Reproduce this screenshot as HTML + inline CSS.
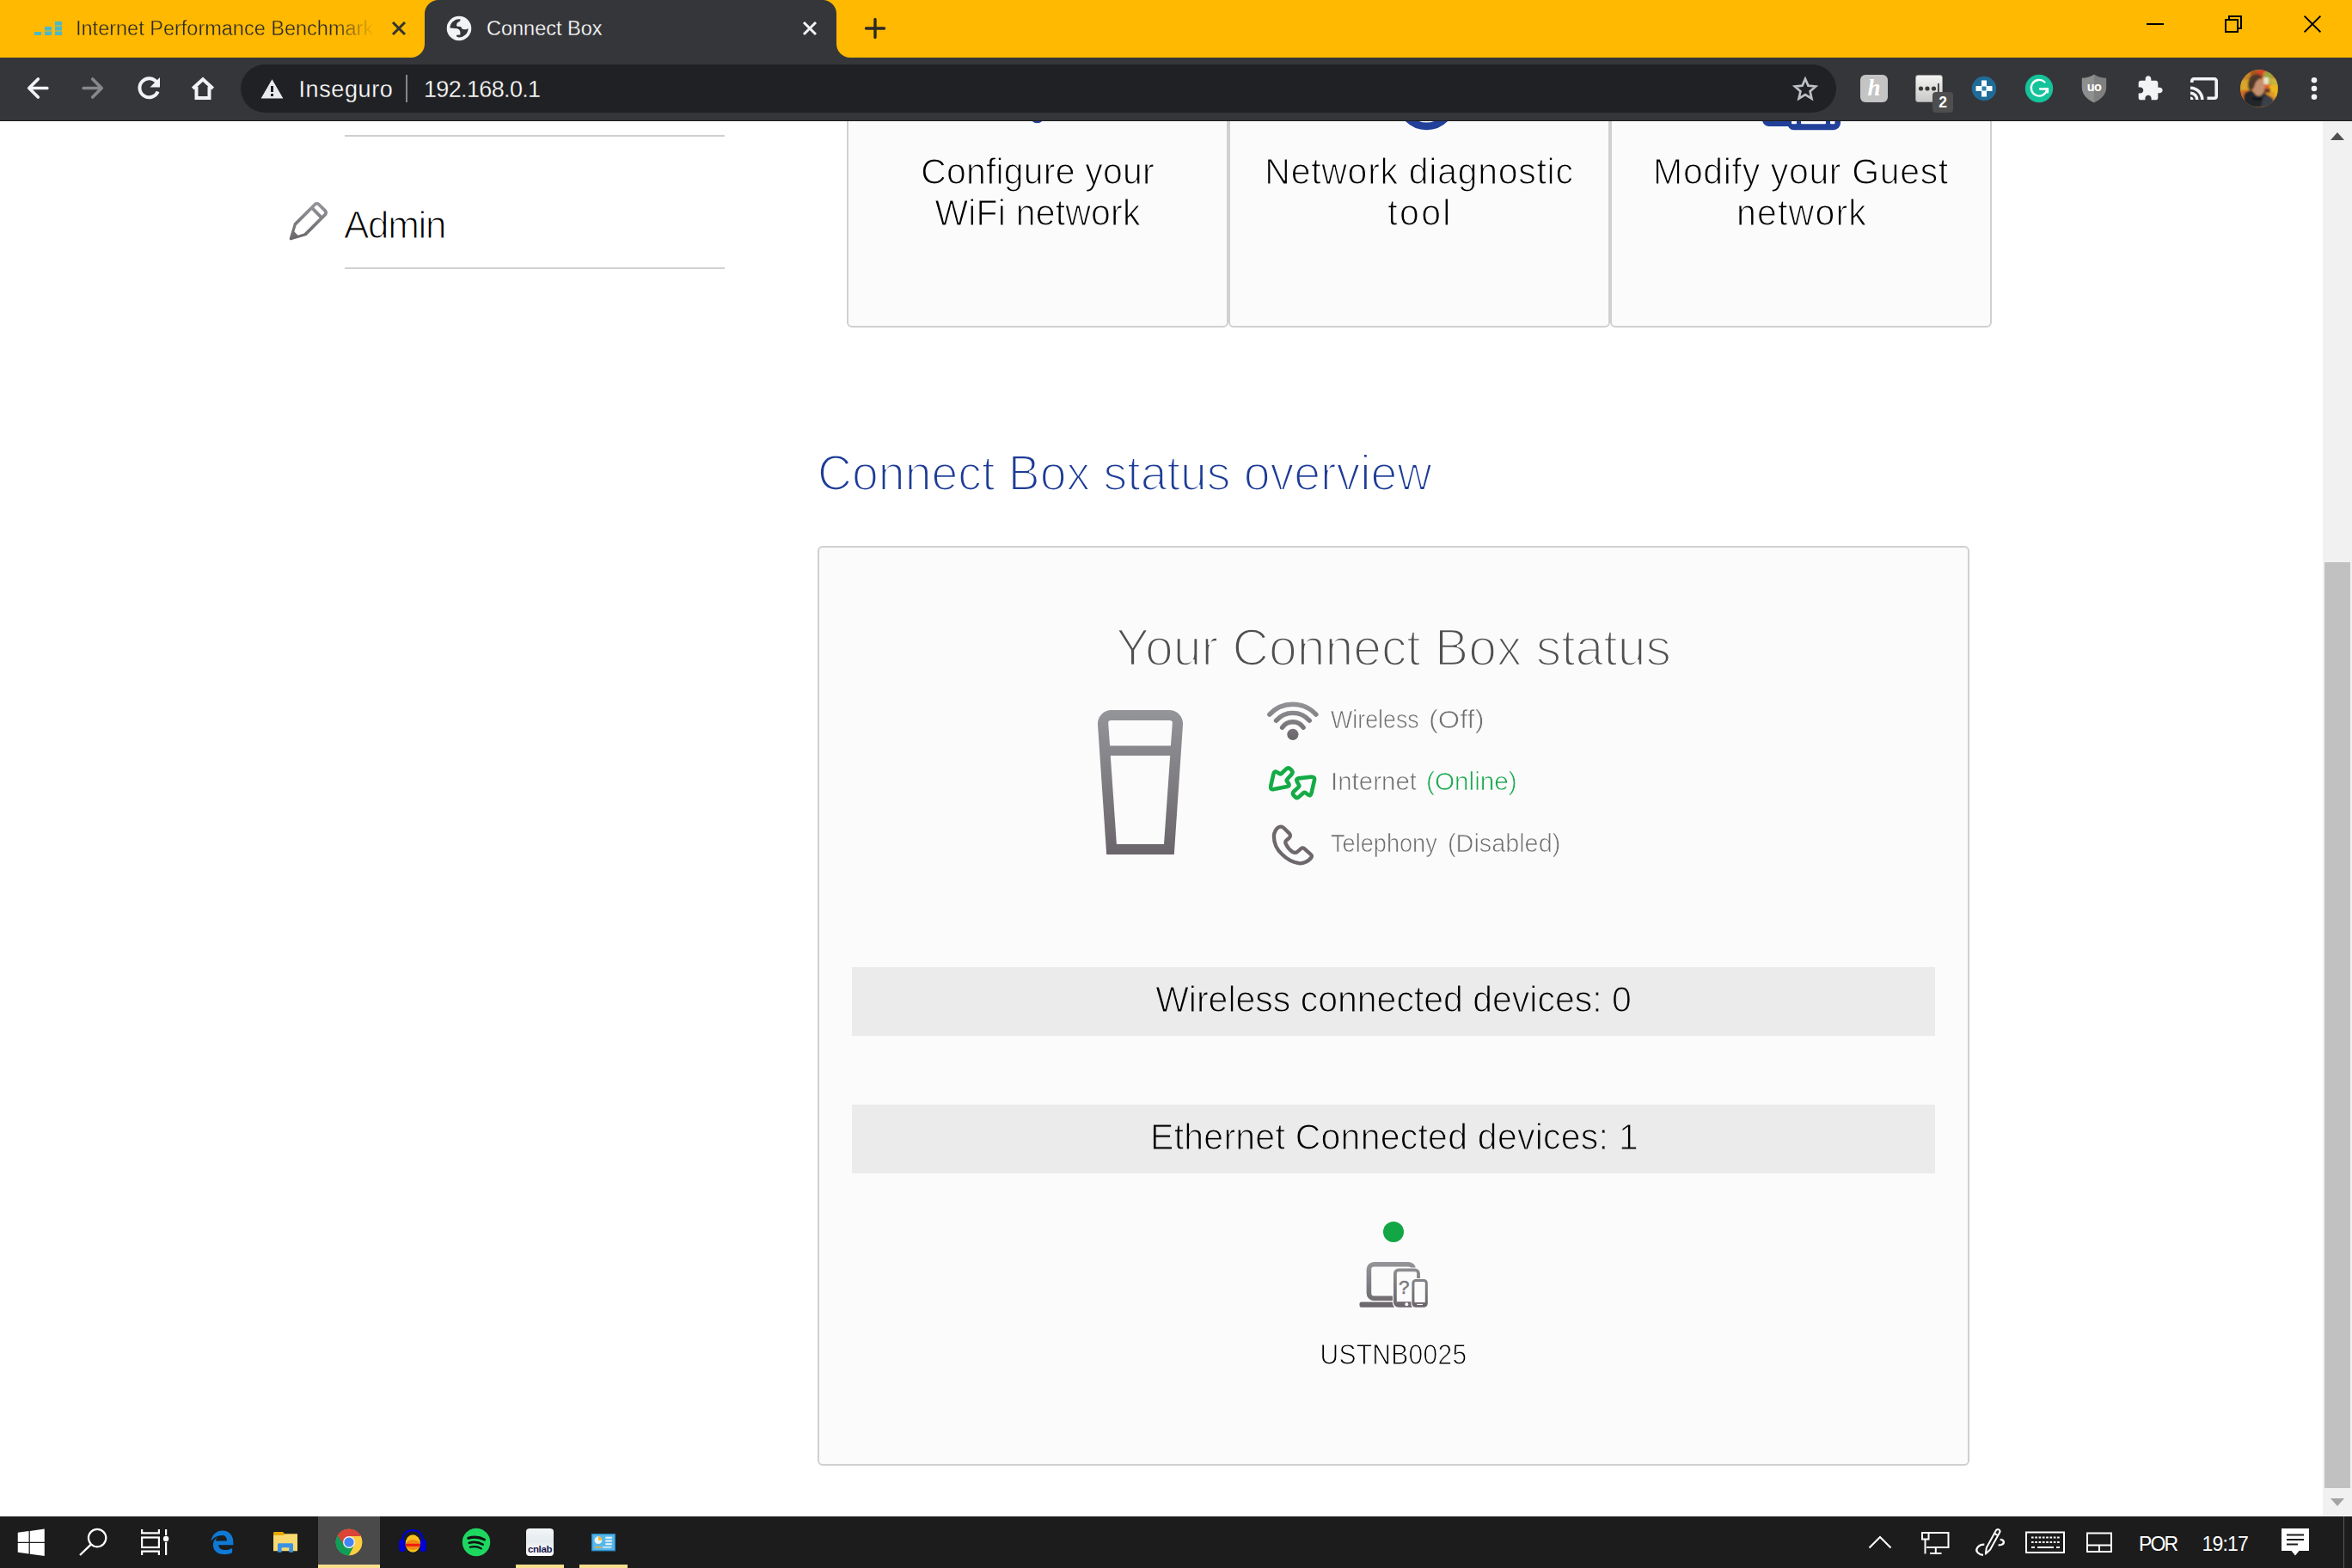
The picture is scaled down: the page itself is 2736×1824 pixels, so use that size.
<!DOCTYPE html>
<html lang="en">
<head>
<meta charset="utf-8">
<title>Connect Box</title>
<style>
html,body{margin:0;padding:0;background:#fff;}
body{width:2736px;height:1824px;overflow:hidden;position:relative;font-family:"Liberation Sans",sans-serif;}
.abs{position:absolute;}
#screen{position:absolute;left:0;top:0;width:2736px;height:1824px;overflow:hidden;background:#fff;}
/* ---------- browser chrome ---------- */
#tabbar{left:0;top:0;width:2736px;height:67px;background:#ffb900;}
#toolbar{left:0;top:67px;width:2736px;height:74px;background:#35363a;box-sizing:border-box;border-bottom:1px solid #1c1d1f;}
#acttab{left:494px;top:0;width:479px;height:67px;background:#35363a;border-radius:16px 16px 0 0;}
.tabtxt{font-size:23.5px;line-height:28px;white-space:nowrap;-webkit-text-stroke:.35px #ffb900;}
#omni{left:280px;top:75px;width:1856px;height:56px;border-radius:28px;background:#202124;}
.omtxt{font-size:27px;line-height:32px;color:#fff;white-space:nowrap;-webkit-text-stroke:.3px #202124;}
/* ---------- page ---------- */
#page{left:0;top:141px;width:2702px;height:1623px;background:#fff;overflow:hidden;}
.thin{-webkit-text-stroke:1.1px #fafafa;}
.card{top:-60px;width:440px;height:436px;border:2px solid #cfcfcf;border-radius:6px;background:#fafafa;}
.cardtxt{font-size:41px;line-height:48px;color:#000;text-align:center;white-space:nowrap;}
#panel{left:951px;top:494px;width:1336px;height:1066px;border:2px solid #cfcfcf;border-radius:6px;background:#fafafa;}
.bar{left:991px;width:1260px;height:80px;background:#ebebeb;text-align:center;font-size:41px;line-height:80px;color:#000;white-space:nowrap;-webkit-text-stroke:1.1px #ebebeb;}
.st{font-size:29px;line-height:36px;color:#6e6e6e;white-space:nowrap;letter-spacing:.3px;-webkit-text-stroke:.7px #fafafa;}
/* ---------- scrollbar ---------- */
#sb{left:2702px;top:141px;width:34px;height:1623px;background:#f1f1f1;}
#sbthumb{left:2704px;top:654px;width:30px;height:1077px;background:#c1c1c1;}
/* ---------- taskbar ---------- */
#taskbar{left:0;top:1764px;width:2736px;height:60px;background:#1c1c1c;}
.tbtxt{font-size:23px;line-height:26px;color:#fff;white-space:nowrap;}
</style>
</head>
<body>
<div id="screen">

<!-- ================= BROWSER CHROME ================= -->
<div id="tabbar" class="abs"></div>
<div id="toolbar" class="abs"></div>

<!-- inactive tab -->
<svg class="abs" style="left:38px;top:22px" width="38" height="22" viewBox="0 0 38 22">
  <g fill="#4cb8c8"><rect x="2" y="15" width="8" height="4"/><rect x="14" y="9" width="8" height="10"/><rect x="26" y="3" width="8" height="16"/></g>
  <g stroke="#ffb900" stroke-width="1.2"><path d="M13 14h10M25 8h10M25 14h10"/></g>
</svg>
<div class="abs tabtxt" style="left:88px;top:19px;width:348px;overflow:hidden;color:#2a2a2a;-webkit-mask-image:linear-gradient(90deg,#000 0,#000 300px,transparent 348px);mask-image:linear-gradient(90deg,#000 0,#000 300px,transparent 348px);">Internet Performance Benchmark</div>
<svg class="abs" style="left:454px;top:23px" width="20" height="20" viewBox="0 0 20 20"><path d="M3 3L17 17M17 3L3 17" stroke="#33342f" stroke-width="3" fill="none"/></svg>

<!-- active tab -->
<svg class="abs" style="left:478px;top:0" width="512" height="68" viewBox="0 0 512 68">
  <path d="M0 68 L0 67 A16 16 0 0 0 16 51 L16 16 A16 16 0 0 1 32 0 L479 0 A16 16 0 0 1 495 16 L495 51 A16 16 0 0 0 511 67 L512 68 Z" fill="#35363a"/>
</svg>
<svg class="abs" style="left:519px;top:18px" width="30" height="30" viewBox="0 0 30 30">
  <circle cx="15" cy="15" r="14.3" fill="#f1f3f4"/>
  <path d="M16.700,4.500 A10.600,10.600 0 0 0 4.400,14.500 L12.800,15.200 Q15.500,15.600 16.400,19.100 L16.400,22.400 L12.100,22.700 L12.100,24.500 Q13.200,25.300 14.600,25.400 A10.600,10.600 0 0 0 25.600,14.900 Q23.500,16.600 21.700,16.300 Q19,16.300 18.100,15.200 Q17.800,13.200 16.700,13.100 L13.100,12.700 Q11.800,12.300 12.100,11.300 Q12.300,9 13.100,8.400 Q14.500,7.300 15.600,7 Q16.600,6 16.700,4.500 Z" fill="#35363a"/>
</svg>
<div class="abs tabtxt" style="left:566px;top:19px;color:#fff;-webkit-text-stroke:.3px #35363a;">Connect Box</div>
<svg class="abs" style="left:932px;top:23px" width="20" height="20" viewBox="0 0 20 20"><path d="M3 3L17 17M17 3L3 17" stroke="#f1f3f4" stroke-width="3" fill="none"/></svg>
<!-- new tab plus -->
<svg class="abs" style="left:1005px;top:20px" width="26" height="26" viewBox="0 0 26 26"><path d="M13 2.500V23.500M2.500 13H23.500" stroke="#2a2a2a" stroke-width="3.400" stroke-linecap="round" fill="none"/></svg>

<!-- window controls -->
<svg class="abs" style="left:2490px;top:12px" width="220" height="34" viewBox="0 0 220 34">
  <g stroke="#000" stroke-width="2" fill="none">
    <path d="M7 16H27"/>
    <path d="M99 11H113V25H99Z"/><path d="M103 11V7H117V21H113"/>
    <path d="M190.600 6.600L209.400 25.400M209.400 6.600L190.600 25.400"/>
  </g>
</svg>

<!-- nav buttons -->
<svg class="abs" style="left:24px;top:82px" width="240" height="42" viewBox="0 0 240 42">
  <g fill="none" stroke-width="3.700" stroke-linecap="round" stroke-linejoin="round">
    <path d="M30.800 20.500H9.800M20.300 10L9.800 20.500L20.300 31" stroke="#f1f3f4"/>
    <path d="M73.200 20.500H94.200M83.700 10L94.200 20.500L83.700 31" stroke="#87888b"/>
  </g>
  <g fill="none" stroke="#f1f3f4" stroke-width="4">
    <path d="M158.500 14A11 11 0 1 0 159.600 24.500"/>
  </g>
  <path d="M162 8V19.500H150.500Z" fill="#f1f3f4"/>
  <g fill="none" stroke="#f1f3f4" stroke-width="4" stroke-linejoin="miter">
    <path d="M200.300 21 L212 10.300 L223.700 21"/><path d="M204.500 19V32H219.500V19"/>
  </g>
</svg>

<!-- omnibox -->
<div id="omni" class="abs"></div>
<svg class="abs" style="left:302px;top:91px" width="29" height="25" viewBox="0 0 29 25"><path d="M14.500 1.300L27.400 23.400H1.600Z" fill="#e8eaed"/><rect x="13" y="9" width="3" height="7" fill="#202124"/><rect x="13" y="18" width="3" height="3" fill="#202124"/></svg>
<div class="abs omtxt" style="left:347.500px;top:87.500px;letter-spacing:.6px;">Inseguro</div>
<div class="abs" style="left:472px;top:87px;width:2px;height:32px;background:#86878a;"></div>
<div class="abs omtxt" style="left:493px;top:87.500px;letter-spacing:-.65px;">192.168.0.1</div>
<svg class="abs" style="left:2085px;top:87.500px" width="30" height="30" viewBox="0 0 34 34"><path d="M17 4.200L20.900 13.200L30.700 14.100L23.300 20.600L25.500 30.200L17 25.100L8.500 30.200L10.700 20.600L3.300 14.100L13.100 13.200Z" fill="none" stroke="#bdc1c6" stroke-width="3" stroke-linejoin="miter"/></svg>

<!-- extensions -->
<div class="abs" style="left:2164px;top:87px;width:32px;height:32px;border-radius:6px;background:#c4c4c4;"></div>
<div class="abs" style="left:2164px;top:87px;width:32px;height:32px;text-align:center;font-family:'Liberation Serif',serif;font-style:italic;font-weight:bold;font-size:27px;line-height:30px;color:#fff;">h</div>

<div class="abs" style="left:2228px;top:87px;width:30px;height:30px;border:1px solid #9a9a9a;border-radius:3px;background:linear-gradient(#f4f4f2,#c9c9c7);"></div>
<svg class="abs" style="left:2228px;top:87px" width="32" height="32" viewBox="0 0 32 32"><g fill="#3a3a3a"><circle cx="6.500" cy="16" r="2.600"/><circle cx="14" cy="16" r="2.600"/><circle cx="21.500" cy="16" r="2.600"/><rect x="26" y="10" width="1.800" height="10"/></g></svg>
<div class="abs" style="left:2248px;top:107px;width:24px;height:24px;border-radius:4px;background:#4e4e4e;color:#fff;font-weight:bold;font-size:17.500px;line-height:25px;text-align:center;">2</div>

<svg class="abs" style="left:2293px;top:88px" width="30" height="30" viewBox="0 0 30 30"><circle cx="15" cy="15" r="14.200" fill="#1f6c98"/><path d="M12 5.500h6v6.500h6.500v6H18v6.500h-6V18H5.500v-6H12z" fill="#fff"/><rect x="12.500" y="12.500" width="5" height="5" fill="#2b7fb0"/></svg>

<svg class="abs" style="left:2355px;top:86px" width="34" height="34" viewBox="0 0 34 34"><circle cx="17" cy="17" r="16.200" fill="#15c39a"/><path d="M23.500 9.500A9.300 9.300 0 1 0 26.300 17.500H18" fill="none" stroke="#fff" stroke-width="2.300" stroke-linecap="round"/><path d="M23 17.500h4v4" fill="none" stroke="#fff" stroke-width="2.300" stroke-linecap="round" stroke-linejoin="round"/></svg>

<svg class="abs" style="left:2420px;top:85px" width="32" height="36" viewBox="0 0 32 36">
  <path d="M16 1.500C11.500 4.500 6.500 5.500 1.800 5.800V17C1.800 25 8.500 31 16 34.500Z" fill="#8e8e8e"/>
  <path d="M16 1.500C20.500 4.500 25.500 5.500 30.200 5.800V17C30.200 25 23.500 31 16 34.500Z" fill="#7f7f7f"/>
  <text x="16" y="20.500" text-anchor="middle" font-family="Liberation Sans, sans-serif" font-weight="bold" font-size="14.500" letter-spacing="-.6" fill="#fff">uo</text>
</svg>

<svg class="abs" style="left:2485px;top:87px" width="32" height="32" viewBox="0 0 24 24"><path d="M20.500 11H19V7c0-1.100-.9-2-2-2h-4V3.500C13 2.120 11.880 1 10.500 1S8 2.120 8 3.500V5H4c-1.100 0-1.990.9-1.990 2v3.800H3.500c1.490 0 2.700 1.210 2.700 2.700s-1.210 2.700-2.700 2.700H2V20c0 1.100.9 2 2 2h3.800v-1.500c0-1.490 1.210-2.700 2.700-2.700 1.490 0 2.700 1.210 2.700 2.700V22H17c1.100 0 2-.9 2-2v-4h1.500c1.380 0 2.500-1.120 2.500-2.500S21.880 11 20.500 11z" fill="#f1f3f4"/></svg>

<svg class="abs" style="left:2546px;top:88px" width="36" height="30" viewBox="0 0 36 30">
  <g fill="none" stroke="#f1f3f4" stroke-width="3.600">
    <path d="M3.800 8V6A2.200 2.200 0 0 1 6 3.800H30A2.200 2.200 0 0 1 32.200 6V24A2.200 2.200 0 0 1 30 26.200H21.500"/>
    <path d="M2 14.200A13.800 13.800 0 0 1 15.800 28"/><path d="M2 20.200A7.800 7.800 0 0 1 9.800 28"/>
  </g>
  <path d="M2 24.500A3.500 3.500 0 0 1 5.500 28H2Z" fill="#f1f3f4"/>
</svg>

<!-- avatar -->
<svg class="abs" style="left:2606px;top:81px" width="44" height="44" viewBox="0 0 44 44">
  <defs><clipPath id="avc"><circle cx="22" cy="22" r="22"/></clipPath>
  <filter id="avb" x="-20%" y="-20%" width="140%" height="140%"><feGaussianBlur stdDeviation="1.1"/></filter></defs>
  <g clip-path="url(#avc)">
    <rect width="44" height="44" fill="#c9852a"/>
    <g filter="url(#avb)">
      <rect x="0" y="12" width="12" height="16" fill="#d9a62c"/>
      <rect x="0" y="24" width="10" height="12" fill="#d46a24"/>
      <rect x="12" y="0" width="10" height="8" fill="#a85a1c"/>
      <rect x="20" y="0" width="10" height="9" fill="#d8402c"/>
      <rect x="27" y="3" width="10" height="16" fill="#9aa53a"/>
      <rect x="27" y="9" width="6" height="10" fill="#e8e4c8"/>
      <rect x="34" y="10" width="10" height="10" fill="#c8b43a"/>
      <rect x="28" y="17" width="9" height="7" fill="#e0602c"/>
      <rect x="34" y="18" width="10" height="14" fill="#ecb81c"/>
      <rect x="28" y="26" width="12" height="10" fill="#e29a2a"/>
      <rect x="27" y="22" width="8" height="5" fill="#6a3a22"/>
      <path d="M4 44V30Q6 25 12 24L17 27H28L34 31Q40 33 40 44Z" fill="#23262c"/>
      <path d="M24 44L27 30L36 32Q40 34 39 44Z" fill="#3b4048"/>
      <ellipse cx="21.500" cy="20.500" rx="7" ry="10.300" fill="#c4906f"/>
      <path d="M9 20Q8 8 17 5.500Q24 4 26 10Q20 10.500 17.500 16L16 21L13 24Q9.500 24 9 20Z" fill="#4e372b"/>
      <path d="M14 30Q18 35 26 31L25 36H15Z" fill="#15171b"/>
    </g>
  </g>
</svg>

<svg class="abs" style="left:2684px;top:86px" width="16" height="34" viewBox="0 0 16 34"><g fill="#f1f3f4"><circle cx="8" cy="7.200" r="3.300"/><circle cx="8" cy="17" r="3.300"/><circle cx="8" cy="26.800" r="3.300"/></g></svg>


<!-- ================= PAGE ================= -->
<div id="page" class="abs">
<div class="abs" style="left:0;top:-141px;width:2702px;height:1824px;">
<div class="abs" style="left:401px;top:157px;width:442px;height:2px;background:#d0d0d0;"></div>
<div class="abs" style="left:401px;top:311px;width:442px;height:2px;background:#d0d0d0;"></div>
<svg class="abs" style="left:330px;top:228px" width="60" height="60" viewBox="0 0 60 60">
<defs><linearGradient id="gp" gradientUnits="userSpaceOnUse" x1="30" y1="-30" x2="0" y2="0"><stop offset="0" stop-color="#949599"/><stop offset="1" stop-color="#6a656a"/></linearGradient></defs>
<g transform="translate(6.8 51.2) rotate(-45) scale(1.005)">
<path fill="url(#gp)" fill-rule="evenodd" d="M1.200,-1.300 L17.500,-10.200 L50,-10.200 A5,5 0 0 1 55,-5.200 L55,5.200 A5,5 0 0 1 50,10.200 L17.500,10.200 L1.200,1.300 A1.500,1.500 0 0 1 1.200,-1.300 Z M10.800,-3 L17.400,-6.400 L42.700,-6.400 L42.700,6.400 L17.400,6.400 L10.800,3 Z M46.500,-6.400 L50,-6.400 A1.200,1.200 0 0 1 51.200,-5.200 L51.200,5.200 A1.200,1.200 0 0 1 50,6.400 L46.500,6.400 Z"/>
</g></svg>
<div class="abs" style="font-size:44px;line-height:44px;top:239.75px;color:#000;white-space:nowrap;-webkit-text-stroke:1.2px #fff;left:400px;letter-spacing:-1.3px;">Admin</div>
<div class="abs" style="left:985px;top:40px;width:440px;height:337px;border:2px solid #d0d0d0;border-radius:6px;background:#fbfbfb;"></div>
<div class="abs" style="font-size:42px;line-height:42px;top:178.95px;color:#000;white-space:nowrap;-webkit-text-stroke:1.15px #fbfbfb;left:967.10px;width:480px;text-align:center;transform:scaleX(0.976);transform-origin:50% 50%;letter-spacing:0.20px;">Configure your</div>
<div class="abs" style="font-size:42px;line-height:42px;top:226.95px;color:#000;white-space:nowrap;-webkit-text-stroke:1.15px #fbfbfb;left:967.10px;width:480px;text-align:center;transform:scaleX(0.976);transform-origin:50% 50%;letter-spacing:0.20px;">WiFi network</div>
<div class="abs" style="left:1429px;top:40px;width:440px;height:337px;border:2px solid #d0d0d0;border-radius:6px;background:#fbfbfb;"></div>
<div class="abs" style="font-size:42px;line-height:42px;top:178.95px;color:#000;white-space:nowrap;-webkit-text-stroke:1.15px #fbfbfb;left:1411.36px;width:480px;text-align:center;transform:scaleX(0.976);transform-origin:50% 50%;letter-spacing:0.74px;">Network diagnostic</div>
<div class="abs" style="font-size:42px;line-height:42px;top:226.95px;color:#000;white-space:nowrap;-webkit-text-stroke:1.15px #fbfbfb;left:1412.15px;width:480px;text-align:center;transform:scaleX(0.976);transform-origin:50% 50%;letter-spacing:2.36px;">tool</div>
<div class="abs" style="left:1873px;top:40px;width:440px;height:337px;border:2px solid #d0d0d0;border-radius:6px;background:#fbfbfb;"></div>
<div class="abs" style="font-size:42px;line-height:42px;top:178.95px;color:#000;white-space:nowrap;-webkit-text-stroke:1.15px #fbfbfb;left:1855.32px;width:480px;text-align:center;transform:scaleX(0.976);transform-origin:50% 50%;letter-spacing:0.67px;">Modify your Guest</div>
<div class="abs" style="font-size:42px;line-height:42px;top:226.95px;color:#000;white-space:nowrap;-webkit-text-stroke:1.15px #fbfbfb;left:1855.60px;width:480px;text-align:center;transform:scaleX(0.976);transform-origin:50% 50%;letter-spacing:1.23px;">network</div>
<svg class="abs" style="left:985px;top:100px" width="1332" height="60" viewBox="985 100 1332 60">
<circle cx="1206.5" cy="134.500" r="8.700" fill="#21409a"/>
<circle cx="1659.500" cy="116.500" r="30.400" fill="none" stroke="#21409a" stroke-width="8.800"/>
<path d="M2050 120 V139 A8 8 0 0 0 2058 147 H2080 A8 8 0 0 0 2087 151.200 H2133 A8 8 0 0 0 2141 143.200 V120 Z" fill="#21409a"/>
<g fill="#fbfbfb"><rect x="2084" y="120" width="6" height="24.300" rx="1"/><rect x="2095" y="120" width="29" height="24.300" rx="1"/><rect x="2129" y="120" width="5.500" height="24.300" rx="1"/></g>
</svg>
<div class="abs" style="font-size:57.5px;line-height:57.5px;top:521.93px;color:#1d3c96;white-space:nowrap;-webkit-text-stroke:2.2px #fff;left:950.8px;transform:scaleX(0.9635);transform-origin:0 50%;">Connect Box status overview</div>
<div class="abs" style="left:951px;top:635px;width:1336px;height:1066px;border:2px solid #d0d0d0;border-radius:6px;background:#fbfbfb;"></div>
<div class="abs" style="font-size:62px;line-height:62px;top:722.32px;color:#505050;white-space:nowrap;-webkit-text-stroke:2.45px #fbfbfb;left:1121.00px;width:1000px;text-align:center;transform:scaleX(0.9495);transform-origin:50% 50%;">Your Connect Box status</div>
<svg class="abs" style="left:1277px;top:826px" width="99" height="168" viewBox="0 0 99 168">
<defs><linearGradient id="gr" x1="0" y1="0" x2="0" y2="1"><stop offset="0" stop-color="#949599"/><stop offset="1" stop-color="#6a656a"/></linearGradient></defs>
<path fill="url(#gr)" fill-rule="evenodd" d="M0,17 A16,16 0 0 1 16,0 L83,0 A16,16 0 0 1 99,17 L88.800,168 L10.200,168 Z M15.200,12 L83.800,12 Q87,12 86.800,15.200 L84.900,41.600 L14.100,41.600 L12.200,15.200 Q12,12 15.200,12 Z M14.800,52.900 L84.200,52.900 L77,156 L21.900,156 Z"/>
</svg>
<svg class="abs" style="left:1470px;top:812px" width="68" height="54" viewBox="1470 812 68 54">
<defs><linearGradient id="gw" gradientUnits="userSpaceOnUse" x1="0" y1="816" x2="0" y2="861"><stop offset="0" stop-color="#949599"/><stop offset="1" stop-color="#6a656a"/></linearGradient></defs>
<g fill="none" stroke="url(#gw)" stroke-width="5.400" stroke-linecap="round">
<path d="M1476.800,831.100 A36.700,36.700 0 0 1 1530.900,831.100"/>
<path d="M1484.500,838.300 A25.600,25.600 0 0 1 1523.300,838.300"/>
<path d="M1491.600,846.200 A14.900,14.900 0 0 1 1516.100,846.200"/>
</g>
<circle cx="1503.900" cy="854.300" r="6.600" fill="url(#gw)"/>
</svg>
<svg class="abs" style="left:1470px;top:886px" width="66" height="50" viewBox="0 0 66 50">
<g fill="none" stroke="#14ab46" stroke-width="4.600" stroke-linejoin="round">
<path d="M11.42,14.20 Q12.30,10.30 15.71,12.40 L18.32,14.01 Q19.60,14.80 20.68,13.76 L26.07,8.62 Q28.60,6.20 31.09,8.65 L32.31,9.85 Q34.80,12.30 32.44,14.88 L27.31,20.49 Q26.30,21.60 27.19,22.81 L28.84,25.07 Q31.20,28.30 27.27,29.07 L12.11,32.04 Q7.20,33.00 8.30,28.12 Z"/>
<path d="M58.88,22.07 Q60.00,17.20 55.03,17.76 L40.97,19.35 Q37.00,19.80 38.88,23.33 L40.99,27.28 Q41.70,28.60 40.59,29.60 L35.20,34.46 Q32.60,36.80 34.99,39.35 L36.21,40.65 Q38.60,43.20 41.20,40.86 L46.28,36.30 Q47.40,35.30 48.61,36.19 L51.38,38.23 Q54.60,40.60 55.50,36.70 Z"/>
</g></svg>
<svg class="abs" style="left:1460px;top:945px" width="80" height="70" viewBox="0 0 80 70">
<path fill="none" stroke="#6e686d" stroke-width="4.300" stroke-linejoin="round" d="M29.600,16.600 C25,17 21.900,23 21.900,28 C21.900,36 26,44 31.600,49 C37,54.500 44,58 51,59.200 C56,59.800 62,57 65.300,52.600 C66.500,51 66,49.800 64.500,48.600 L57.500,42.300 C56.200,41.200 54.500,41.200 53.200,42.300 L49,46 C47.500,47.200 45.500,47 43.400,45.900 C40.500,44 37.500,40.500 35.700,36.700 C35,35.200 35.200,33.800 36.400,32.600 L39.800,29.600 C41.200,28.200 41.300,26 40,24.600 L33.500,18.200 C32.400,17.100 31,16.500 29.600,16.600 Z"/>
</svg>
<div class="abs" style="font-size:30px;line-height:30px;top:821.61px;color:#6f6f72;white-space:nowrap;-webkit-text-stroke:.7px #fbfbfb;left:1548.2px;transform:scaleX(0.893);transform-origin:0 50%;">Wireless</div>
<div class="abs" style="font-size:30px;line-height:30px;top:821.61px;color:#6f6f72;white-space:nowrap;-webkit-text-stroke:.7px #fbfbfb;left:1661.9px;transform:scaleX(1.085);transform-origin:0 50%;">(Off)</div>
<div class="abs" style="font-size:30px;line-height:30px;top:893.81px;color:#6f6f72;white-space:nowrap;-webkit-text-stroke:.7px #fbfbfb;left:1548.2px;transform:scaleX(0.983);transform-origin:0 50%;">Internet</div>
<div class="abs" style="font-size:30px;line-height:30px;top:893.81px;color:#1aa850;white-space:nowrap;-webkit-text-stroke:.7px #fbfbfb;left:1659.2px;transform:scaleX(0.991);transform-origin:0 50%;">(Online)</div>
<div class="abs" style="font-size:30px;line-height:30px;top:965.50px;color:#6f6f72;white-space:nowrap;-webkit-text-stroke:.7px #fbfbfb;left:1547.8px;transform:scaleX(0.905);transform-origin:0 50%;">Telephony</div>
<div class="abs" style="font-size:30px;line-height:30px;top:965.50px;color:#6f6f72;white-space:nowrap;-webkit-text-stroke:.7px #fbfbfb;left:1684.1px;transform:scaleX(0.96);transform-origin:0 50%;">(Disabled)</div>
<div class="abs" style="left:991px;top:1125px;width:1260px;height:80px;background:#ebebeb;"></div>
<div class="abs" style="left:991px;top:1285px;width:1260px;height:80px;background:#ebebeb;"></div>
<div class="abs" style="font-size:42.6px;line-height:42.6px;top:1141.34px;color:#000;white-space:nowrap;-webkit-text-stroke:1.15px #ebebeb;left:1021.00px;width:1200px;text-align:center;transform:scaleX(0.9625);transform-origin:50% 50%;">Wireless connected devices: 0</div>
<div class="abs" style="font-size:42.6px;line-height:42.6px;top:1301.34px;color:#000;white-space:nowrap;-webkit-text-stroke:1.15px #ebebeb;left:1021.50px;width:1200px;text-align:center;transform:scaleX(0.9625);transform-origin:50% 50%;letter-spacing:.26px;">Ethernet Connected devices: 1</div>
<div class="abs" style="left:1609px;top:1421px;width:24px;height:24px;border-radius:50%;background:#12a644;"></div>
<svg class="abs" style="left:1570px;top:1455px" width="100" height="80" viewBox="0 0 100 80">
<defs><linearGradient id="gd" gradientUnits="userSpaceOnUse" x1="0" y1="13" x2="0" y2="66"><stop offset="0" stop-color="#949599"/><stop offset="1" stop-color="#6a656a"/></linearGradient></defs>
<rect x="22.400" y="15.800" width="52" height="39.400" rx="6" fill="none" stroke="url(#gd)" stroke-width="5.600"/>
<rect x="11.500" y="59.400" width="44" height="6.300" rx="2" fill="url(#gd)"/>
<rect x="50" y="19.400" width="33" height="47.500" rx="6" fill="#fbfbfb"/>
<rect x="52.900" y="22.300" width="27.100" height="41.600" rx="4" fill="#fbfbfb" stroke="url(#gd)" stroke-width="3.800"/>
<rect x="54.800" y="59.200" width="23.200" height="5.600" fill="url(#gd)"/>
<circle cx="66.300" cy="62.200" r="2" fill="#fbfbfb"/>
<text x="63.300" y="49.700" font-family="Liberation Sans, sans-serif" font-size="22.500" text-anchor="middle" fill="#7c797d" stroke="#7c797d" stroke-width=".5">?</text>
<rect x="71.400" y="31.900" width="20.400" height="35" rx="5" fill="#fbfbfb"/>
<rect x="73.900" y="34.400" width="15.400" height="29.900" rx="3" fill="#fbfbfb" stroke="url(#gd)" stroke-width="3"/>
<rect x="74" y="60" width="15" height="4.500" fill="url(#gd)"/>
<rect x="78.300" y="61.900" width="6.700" height="1.100" fill="#fbfbfb"/>
</svg>
<div class="abs" style="font-size:32.5px;line-height:32.5px;top:1560.49px;color:#000;white-space:nowrap;-webkit-text-stroke:.95px #fbfbfb;left:1321.00px;width:600px;text-align:center;transform:scaleX(0.923);transform-origin:50% 50%;letter-spacing:.33px;">USTNB0025</div>
</div>
</div>

<!-- ================= SCROLLBAR ================= -->
<div id="sb" class="abs"></div>
<div id="sbthumb" class="abs"></div>
<svg class="abs" style="left:2710px;top:153px" width="18" height="11" viewBox="0 0 18 11"><path d="M9 1 L17 10 L1 10 Z" fill="#505050"/></svg>
<svg class="abs" style="left:2710px;top:1742px" width="18" height="11" viewBox="0 0 18 11"><path d="M1 1 L17 1 L9 10 Z" fill="#a3a3a3"/></svg>

<!-- ================= TASKBAR ================= -->
<div id="taskbar" class="abs"></div>

<!-- chrome highlight + running indicators -->
<div class="abs" style="left:370px;top:1764px;width:72px;height:60px;background:#4a4a4a;"></div>
<div class="abs" style="left:370px;top:1820px;width:72px;height:4px;background:#f9de8d;"></div>
<div class="abs" style="left:600px;top:1820px;width:56px;height:4px;background:#f9de8d;"></div>
<div class="abs" style="left:674px;top:1820px;width:56px;height:4px;background:#f9de8d;"></div>

<!-- start -->
<svg class="abs" style="left:18.500px;top:1777.500px" width="34.500" height="33.500" viewBox="0 0 36 36" preserveAspectRatio="none">
  <g fill="#fff">
    <path d="M1.800 5.200L15.200 3.300V16.800H1.800Z"/><path d="M16.500 3.100L34.200 0.600V16.800H16.500Z"/>
    <path d="M1.800 18.200H15.200V31.700L1.800 29.800Z"/><path d="M16.500 18.200H34.200V34.400L16.500 31.900Z"/>
  </g>
</svg>
<!-- search -->
<svg class="abs" style="left:90px;top:1775px" width="38" height="38" viewBox="0 0 38 38">
  <circle cx="23.100" cy="14.100" r="10.200" fill="none" stroke="#fff" stroke-width="2.200"/>
  <path d="M15.800 21.600L3 34" stroke="#fff" stroke-width="2.400" fill="none"/>
</svg>
<!-- task view -->
<svg class="abs" style="left:160px;top:1776px" width="40" height="36" viewBox="0 0 40 36">
  <g fill="none" stroke="#fff" stroke-width="2.200">
    <rect x="5.100" y="12.500" width="19.800" height="11.500"/>
    <path d="M5.100 3V7.400H24.900V3"/><path d="M5.100 33V28.600H24.900V33"/>
    <path d="M33.100 3V10M33.100 18V33"/>
  </g>
  <circle cx="33.100" cy="14" r="3.200" fill="#fff"/>
</svg>
<!-- edge -->
<svg class="abs" style="left:243.800px;top:1778.800px" width="28.800" height="30.600" viewBox="0 0 30 32">
  <path d="M1.600 14.500C2.500 6.500 8.500 1.500 15.500 1.500C23.500 1.500 28.500 7.500 28.500 15.500V19H10.500C10.800 23 14.500 25.200 18.800 25.200C22 25.200 24.800 24.300 27.300 22.800V28.600C24.500 30 21.300 30.600 17.800 30.600C9.500 30.600 4 26 4 18.800C4 14.500 6.300 11.200 9.800 9.200C8 11 7.300 12.500 7 14.200H20.800C20.800 10 18.800 7.300 15 7.300C9 7.300 4 10 1.600 14.500Z" fill="#0f7ad6"/>
</svg>
<!-- explorer -->
<svg class="abs" style="left:316px;top:1780px" width="32" height="28" viewBox="0 0 32 28">
  <path d="M2 3.200Q2 2 3.200 2H13L15 4V7H2Z" fill="#e9a800"/>
  <path d="M2 6H13.500L15.500 4.200H30V24.200H2Z" fill="#f9d96f"/>
  <path d="M7 25.800V16.500Q7 15.200 8.300 15.200H23.700Q25 15.200 25 16.500V25.800H20.300V20.200H11.700V25.800Z" fill="#3b92e4"/>
</svg>
<!-- chrome -->
<svg class="abs" style="left:390px;top:1778px" width="32" height="32" viewBox="-16 -16 32 32">
  <circle r="15.300" fill="#ffcd40"/>
  <path d="M0 0L-13.250 -7.650A15.300 15.300 0 0 1 13.250 -7.650Z" fill="#db4437"/>
  <path d="M0 0L13.250 -7.650A15.300 15.300 0 0 1 13.250 -7.650Z" fill="#db4437"/>
  <path d="M0 0L-13.250 -7.650A15.300 15.300 0 0 0 0 15.300Z" fill="#0f9d58"/>
  <path d="M-13.250 -7.650A15.300 15.300 0 0 1 13.250 -7.650L6.100 -7.650H0Z" fill="#db4437"/>
  <path d="M0 15.300A15.300 15.300 0 0 0 13.250 -7.650H0L6 3.500Z" fill="#ffcd40"/>
  <path d="M-13.250 -7.650L-6 3.500L0 15.300A15.300 15.300 0 0 1 -13.250 -7.650Z" fill="#0f9d58"/>
  <path d="M-13.250 -7.650L-6 3.500A7 7 0 0 1 0 -7H13L13.250 -7.650A15.300 15.300 0 0 0 -13.250 -7.650Z" fill="#db4437"/>
  <path d="M-6.060 3.500A7 7 0 0 0 6.060 3.500L0 15.300A15.300 15.300 0 0 1 -13.250 -7.650Z" fill="#0f9d58"/>
  <circle r="7" fill="#f1f1f1"/><circle r="5.600" fill="#4285f4"/>
</svg>
<!-- audacity -->
<svg class="abs" style="left:462px;top:1777px" width="36" height="32" viewBox="0 0 36 32">
  <path d="M6.500 19C5 8 10.500 3.200 18 3.200C25.500 3.200 31 8 29.500 19" fill="none" stroke="#0000d8" stroke-width="2.300"/>
  <rect x="2.200" y="13.500" width="7.300" height="14.500" rx="3.600" fill="#0000d8"/>
  <rect x="26.500" y="13.500" width="7.300" height="14.500" rx="3.600" fill="#0000d8"/>
  <ellipse cx="18.300" cy="18.500" rx="8.600" ry="10.300" fill="#f6c21a"/>
  <ellipse cx="18.300" cy="20" rx="8.600" ry="6" fill="#f08a12"/>
  <rect x="9.700" y="18.800" width="17.200" height="3" fill="#ee1c10"/>
</svg>
<!-- spotify -->
<svg class="abs" style="left:537px;top:1777px" width="34" height="34" viewBox="0 0 34 34">
  <circle cx="17" cy="17" r="16.200" fill="#1ed760"/>
  <g fill="none" stroke="#111" stroke-linecap="round">
    <path d="M7.800 12.300C13.800 10.500 21 11 26.500 14" stroke-width="3.100"/>
    <path d="M8.800 17.800C14 16.300 20 16.900 24.700 19.600" stroke-width="2.600"/>
    <path d="M9.800 22.800C14.200 21.700 19 22.200 22.800 24.400" stroke-width="2.200"/>
  </g>
</svg>
<!-- cnlab -->
<div class="abs" style="left:612px;top:1778px;width:32px;height:32px;border-radius:4px;background:linear-gradient(#f4f6f7 0,#e4ebee 45%,#f0f3f4 70%,#fff 100%);overflow:hidden;">
  <div class="abs" style="left:0;top:18px;width:32px;font-weight:bold;font-size:11.5px;line-height:12px;letter-spacing:-.4px;text-align:center;color:#17184d;">cnlab</div>
</div>
<!-- control panel-ish -->
<svg class="abs" style="left:688px;top:1784px" width="28" height="20.500" viewBox="0 0 30 22">
  <rect x=".800" y=".800" width="28.400" height="20.400" fill="#58b7ea" stroke="#2f93d2" stroke-width="1.400"/>
  <circle cx="8.500" cy="8.300" r="4.700" fill="#e9f5fc"/><path d="M8.500 8.300V3.600A4.700 4.700 0 0 1 13.200 8.300Z" fill="#f7b52c"/>
  <g fill="#e9f5fc"><rect x="17.500" y="4" width="8" height="2.200"/><rect x="17.500" y="8" width="8" height="2.200"/><rect x="17.500" y="12" width="8" height="2.200"/></g>
  <rect x="4" y="16.300" width="9" height="1.500" fill="#f7b52c"/><rect x="14" y="16.300" width="11" height="1.500" fill="#e9f5fc"/>
</svg>

<!-- tray -->
<svg class="abs" style="left:2170px;top:1776px" width="300" height="36" viewBox="2170 1776 300 36">
  <g fill="none" stroke="#fff" stroke-width="2">
    <path d="M2174.500 1800.500L2187 1788L2199.500 1800.500"/>
    <!-- network -->
    <path d="M2241 1783H2266.500V1800H2241"/><path d="M2236 1783H2243.500V1790.500H2236Z"/><path d="M2239.500 1790.500V1807.500"/><path d="M2245 1807H2258.500M2251.800 1800V1807"/>
    <!-- pen -->
    <path d="M2321.900,1780.300 A2.400,2.400 0 0 1 2326.100,1782.700 L2315,1802.800 L2309.800,1807.600 L2310.800,1800.500 Z" stroke-linejoin="round"/><path d="M2320,1783.800L2324.200,1786.200"/>
    <path d="M2308.300,1796.600 C2301,1796.500 2297,1803 2301,1806.500 C2303,1808.300 2305,1808.800 2307,1808.800" stroke-width="2.300"/><path d="M2326.700,1790.900 C2331.500,1791 2332.500,1795.500 2328,1797 C2327,1797.300 2326,1797.300 2324.600,1797.300" stroke-width="2.300"/>
    <!-- keyboard -->
    <rect x="2357" y="1782.500" width="44" height="23.500"/>
    <!-- touchpad -->
    <rect x="2428" y="1783.500" width="28" height="21.500"/><path d="M2428 1797.500H2456M2442 1797.500V1805"/>
  </g>
  <g stroke="#fff" stroke-width="1.800" stroke-dasharray="2.600 1.700" fill="none">
    <path d="M2363 1788.500H2396M2363 1794H2396"/>
  </g>
  <path d="M2363 1800H2367M2370 1800H2389M2392 1800H2396" stroke="#fff" stroke-width="1.800" fill="none"/>
</svg>
<div class="abs tbtxt" style="left:2488px;top:1782.500px;letter-spacing:-1.900px;">POR</div>
<div class="abs tbtxt" style="left:2561.500px;top:1782.500px;letter-spacing:-.800px;">19:17</div>
<svg class="abs" style="left:2652px;top:1776px" width="36" height="36" viewBox="0 0 36 36">
  <path d="M2 2H34V28H22.500L18 33.500L13.500 28H2Z" fill="#fff"/>
  <path d="M8 9.500H28M8 15H28M8 20.500H21" stroke="#1c1c1c" stroke-width="2" fill="none"/>
</svg>
<div class="abs" style="left:2726px;top:1764px;width:1px;height:60px;background:#5a5a5a;"></div>


</div>
</body>
</html>
